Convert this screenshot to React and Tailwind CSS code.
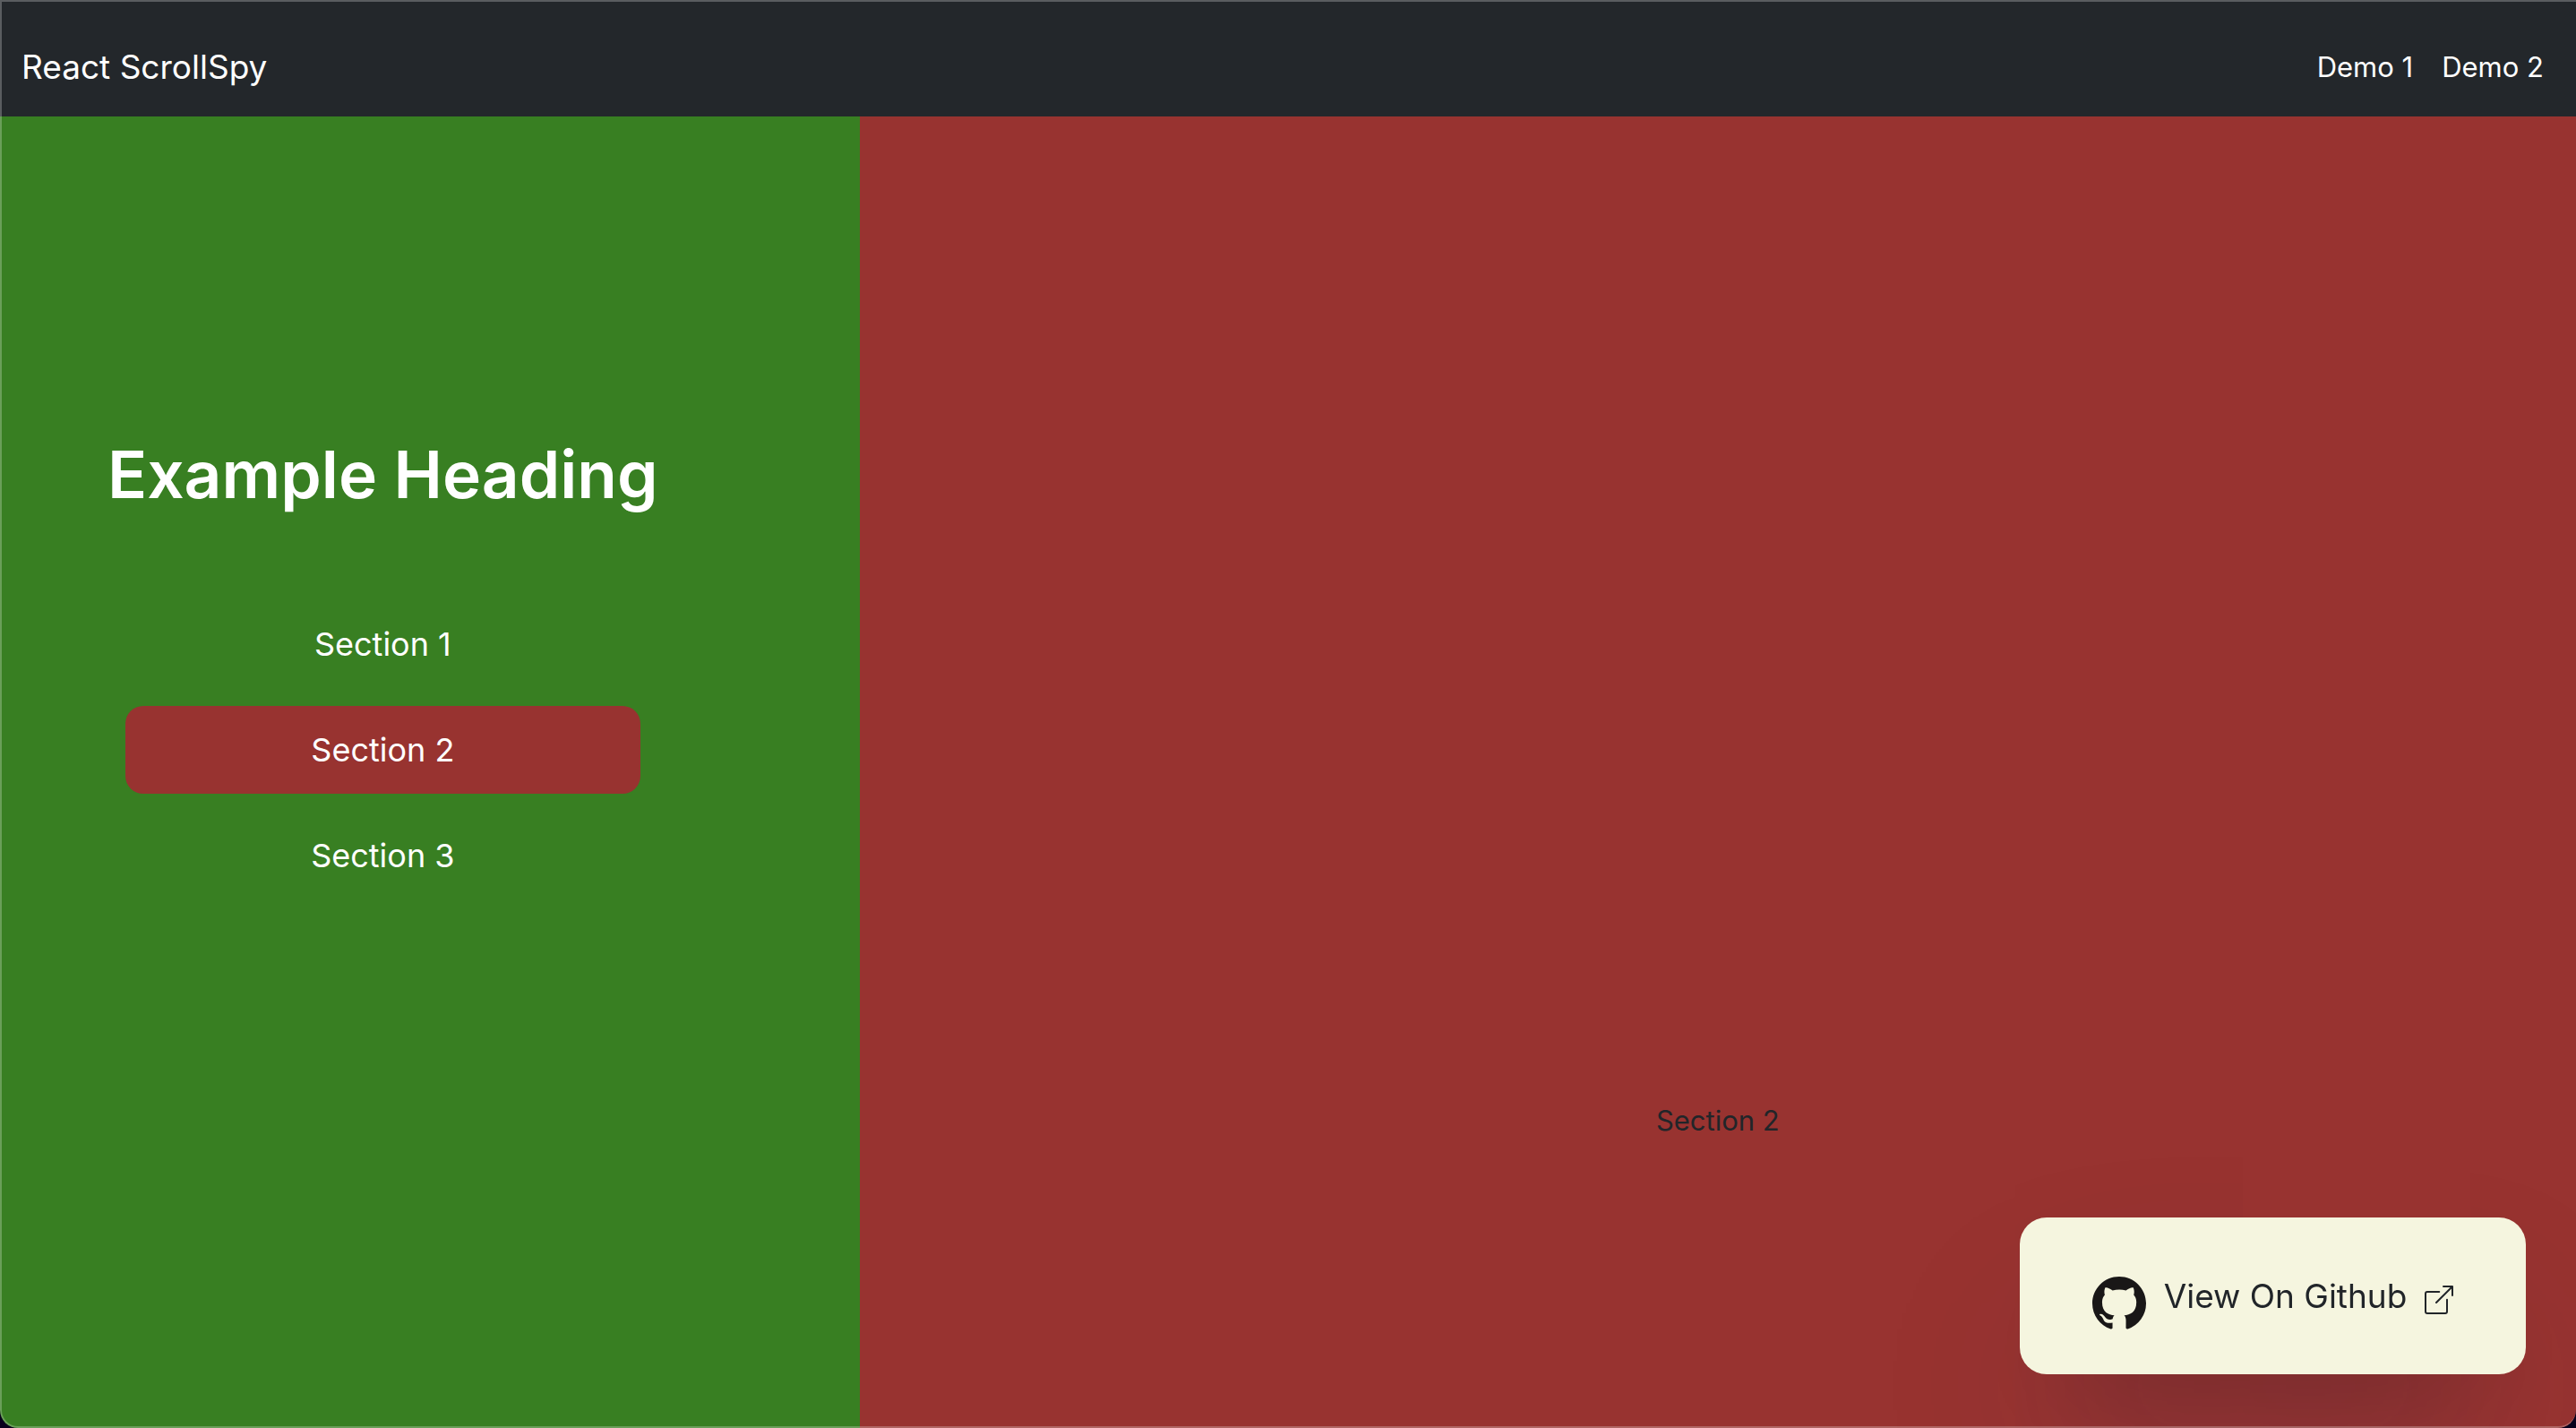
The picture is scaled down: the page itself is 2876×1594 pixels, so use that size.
import { BsBoxArrowUpRight, BsGithub } from "react-icons/bs";

const sections = ["Section 1", "Section 2", "Section 3"];
const active = "Section 2";

function Navbar() {
  return (
    <header className="flex h-[130px] shrink-0 items-center justify-between bg-[#23272b] pt-5 pr-9 pl-6 text-white">
      <a href="#top" className="text-[37px] leading-[60px]">
        React ScrollSpy
      </a>
      <nav className="flex gap-8 text-[31px] leading-[48px]">
        <a href="#demo-1">Demo 1</a>
        <a href="#demo-2">Demo 2</a>
      </nav>
    </header>
  );
}

function Sidebar() {
  return (
    <aside className="w-[calc(100%/3+1px)] bg-[#387f22] pt-[352px] pl-[120px] text-white">
      <div className="flex w-fit flex-col items-center">
        <h1 className="text-[73px] leading-[96px] font-semibold whitespace-nowrap">Example Heading</h1>
        <nav className="mt-[92px] flex w-[20vw] flex-col gap-5 text-[36px]">
          {sections.map((name) => (
            <a
              key={name}
              href={"#" + name.toLowerCase().replace(" ", "-")}
              className={
                name === active
                  ? "rounded-[20px] bg-[#983330] py-5 text-center leading-[58px]"
                  : "rounded-[20px] py-5 text-center leading-[58px]"
              }
            >
              {name}
            </a>
          ))}
        </nav>
      </div>
    </aside>
  );
}

function GithubCard() {
  return (
    <a
      href="#github"
      className="fixed right-14 bottom-[60px] flex h-[175px] w-[565px] items-center justify-center rounded-[30px] bg-[#f5f5df] text-[#212529] shadow-[0_100px_200px_-40px_rgba(50,50,93,0.25),0_60px_120px_-60px_rgba(0,0,0,0.3)]"
    >
      <BsGithub className="mt-4 size-[60px] text-[#191717]" />
      <span className="ml-5 text-[37px] leading-[60px]">View On Github</span>
      <BsBoxArrowUpRight className="mt-2 ml-5 size-8" />
    </a>
  );
}

export default function App() {
  return (
    <div className="min-h-screen bg-[#08001c] font-['Inter',sans-serif]">
      <div className="relative flex min-h-screen flex-col overflow-hidden rounded-b-[20px]">
        <Navbar />
        <main className="flex flex-1">
          <Sidebar />
          <section
            id="section-2"
            className="flex flex-1 justify-center bg-[#983330] pt-[1097px] text-[31px] leading-[48px] text-[#212529]"
          >
            <p>Section 2</p>
          </section>
        </main>
        <GithubCard />
        <div className="pointer-events-none absolute inset-0 rounded-b-[20px] border-y-2 border-l-2 border-white/25" />
      </div>
    </div>
  );
}
